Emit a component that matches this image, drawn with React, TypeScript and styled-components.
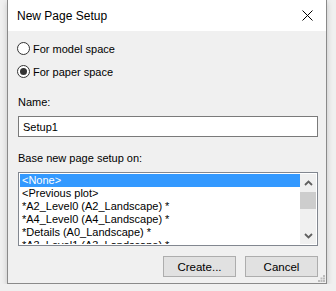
import styled, { createGlobalStyle } from 'styled-components';

const GlobalStyle = createGlobalStyle`
  html, body {
    margin: 0;
    padding: 0;
    background: #f0f0f0;
  }
  body {
    padding-left: 7px;
    font-family: 'Liberation Sans', Arial, sans-serif;
    font-size: 11px;
    color: #000;
  }
`;

const Dialog = styled.div`
  position: relative;
  width: 320px;
  height: 284px;
  box-sizing: border-box;
  border: 1px solid #8a8a8a;
  border-top: none;
  background: #f0f0f0;
  box-shadow: 0 2px 6px rgba(0, 0, 0, 0.18);
  display: flex;
  flex-direction: column;
`;

const TitleBar = styled.div`
  height: 31px;
  background: #fff;
  display: flex;
  align-items: center;
  justify-content: space-between;
  padding: 0 9px 0 9px;
  font-size: 12px;
`;

const CloseButton = styled.div`
  width: 20px;
  height: 20px;
  display: flex;
  align-items: center;
  justify-content: center;
  margin-right: 0px;
`;

const Body = styled.div`
  flex: 1;
  padding: 6px 8px 6px 10px;
  display: flex;
  flex-direction: column;
`;

const RadioRow = styled.label`
  height: 23px;
  display: flex;
  align-items: center;
  gap: 3px;
  margin-left: -1px;
  font-size: 11px;
`;

const RadioCircle = styled.span<{ checked?: boolean }>`
  width: 13px;
  height: 13px;
  box-sizing: border-box;
  border: 1px solid #333;
  border-radius: 50%;
  background: #fff;
  display: flex;
  align-items: center;
  justify-content: center;

  &::after {
    content: '';
    width: 7px;
    height: 7px;
    border-radius: 50%;
    background: ${p => (p.checked ? '#333' : 'transparent')};
  }
`;

const FieldLabel = styled.div<{ top: number }>`
  margin-top: ${p => p.top}px;
  height: 15px;
  line-height: 15px;
`;

const TextInput = styled.div`
  margin-top: 6px;
  width: 300px;
  height: 21px;
  box-sizing: border-box;
  border: 1px solid #7a7a7a;
  background: #fff;
  padding-left: 4px;
  display: flex;
  align-items: center;
`;

const ListBox = styled.div`
  margin-top: 6px;
  width: 300px;
  height: 74px;
  box-sizing: border-box;
  border: 1px solid #828790;
  background: #fff;
  padding: 1px;
  display: flex;
  overflow: hidden;
`;

const Rows = styled.div`
  flex: 1;
  overflow: hidden;
`;

const Row = styled.div<{ selected?: boolean }>`
  height: 13px;
  line-height: 13px;
  padding-left: 2px;
  white-space: nowrap;
  background: ${p => (p.selected ? '#3399ff' : 'transparent')};
  color: ${p => (p.selected ? '#fff' : '#000')};
`;

const ScrollBar = styled.div`
  width: 16px;
  background: #f0f0f0;
  display: flex;
  flex-direction: column;
`;

const ScrollArrow = styled.div`
  height: 17px;
  display: flex;
  align-items: center;
  justify-content: center;
`;

const ScrollTrack = styled.div`
  flex: 1;
  padding-top: 1px;
`;

const ScrollThumb = styled.div`
  height: 17px;
  background: #cdcdcd;
`;

const ButtonRow = styled.div`
  margin-top: auto;
  display: flex;
  justify-content: flex-end;
  gap: 9px;
  padding-right: 0px;
`;

const Button = styled.div`
  width: 73px;
  height: 21px;
  box-sizing: border-box;
  border: 1px solid #adadad;
  background: #e1e1e1;
  display: flex;
  align-items: center;
  justify-content: center;
  font-size: 11.5px;
`;

const Gripper = styled.svg`
  position: absolute;
  right: 1px;
  bottom: 1px;
`;

const Chevron = ({ up }: { up?: boolean }) => (
  <svg width="9" height="6" viewBox="0 0 9 6">
    <path
      d={up ? 'M1 5 L4.5 1.5 L8 5' : 'M1 1 L4.5 4.5 L8 1'}
      fill="none"
      stroke="#606060"
      strokeWidth="1.8"
    />
  </svg>
);

const items = [
  '<None>',
  '<Previous plot>',
  '*A2_Level0 (A2_Landscape) *',
  '*A4_Level0 (A4_Landscape) *',
  '*Details (A0_Landscape) *',
  '*A3_Level1 (A3_Landscape) *',
];

export default function App() {
  return (
    <>
      <GlobalStyle />
      <Dialog>
        <TitleBar>
          <span>New Page Setup</span>
          <CloseButton>
            <svg width="11" height="11" viewBox="0 0 11 11">
              <path d="M0.5 0.5 L10.5 10.5 M10.5 0.5 L0.5 10.5" stroke="#000" strokeWidth="1" />
            </svg>
          </CloseButton>
        </TitleBar>
        <Body>
          <RadioRow>
            <RadioCircle />
            For model space
          </RadioRow>
          <RadioRow>
            <RadioCircle checked />
            For paper space
          </RadioRow>
          <FieldLabel top={12}>Name:</FieldLabel>
          <TextInput>Setup1</TextInput>
          <FieldLabel top={14}>Base new page setup on:</FieldLabel>
          <ListBox>
            <Rows>
              {items.map((item, i) => (
                <Row key={i} selected={i === 0}>
                  {item}
                </Row>
              ))}
            </Rows>
            <ScrollBar>
              <ScrollArrow>
                <Chevron up />
              </ScrollArrow>
              <ScrollTrack>
                <ScrollThumb />
              </ScrollTrack>
              <ScrollArrow>
                <Chevron />
              </ScrollArrow>
            </ScrollBar>
          </ListBox>
          <ButtonRow>
            <Button>Create...</Button>
            <Button>Cancel</Button>
          </ButtonRow>
        </Body>
        <Gripper width="7" height="7" viewBox="0 0 7 7">
          <rect x="5" y="0" width="2" height="2" fill="#bcbcbc" />
          <rect x="2.5" y="2.5" width="2" height="2" fill="#bcbcbc" />
          <rect x="5" y="2.5" width="2" height="2" fill="#bcbcbc" />
          <rect x="0" y="5" width="2" height="2" fill="#bcbcbc" />
          <rect x="2.5" y="5" width="2" height="2" fill="#bcbcbc" />
          <rect x="5" y="5" width="2" height="2" fill="#bcbcbc" />
        </Gripper>
      </Dialog>
    </>
  );
}
